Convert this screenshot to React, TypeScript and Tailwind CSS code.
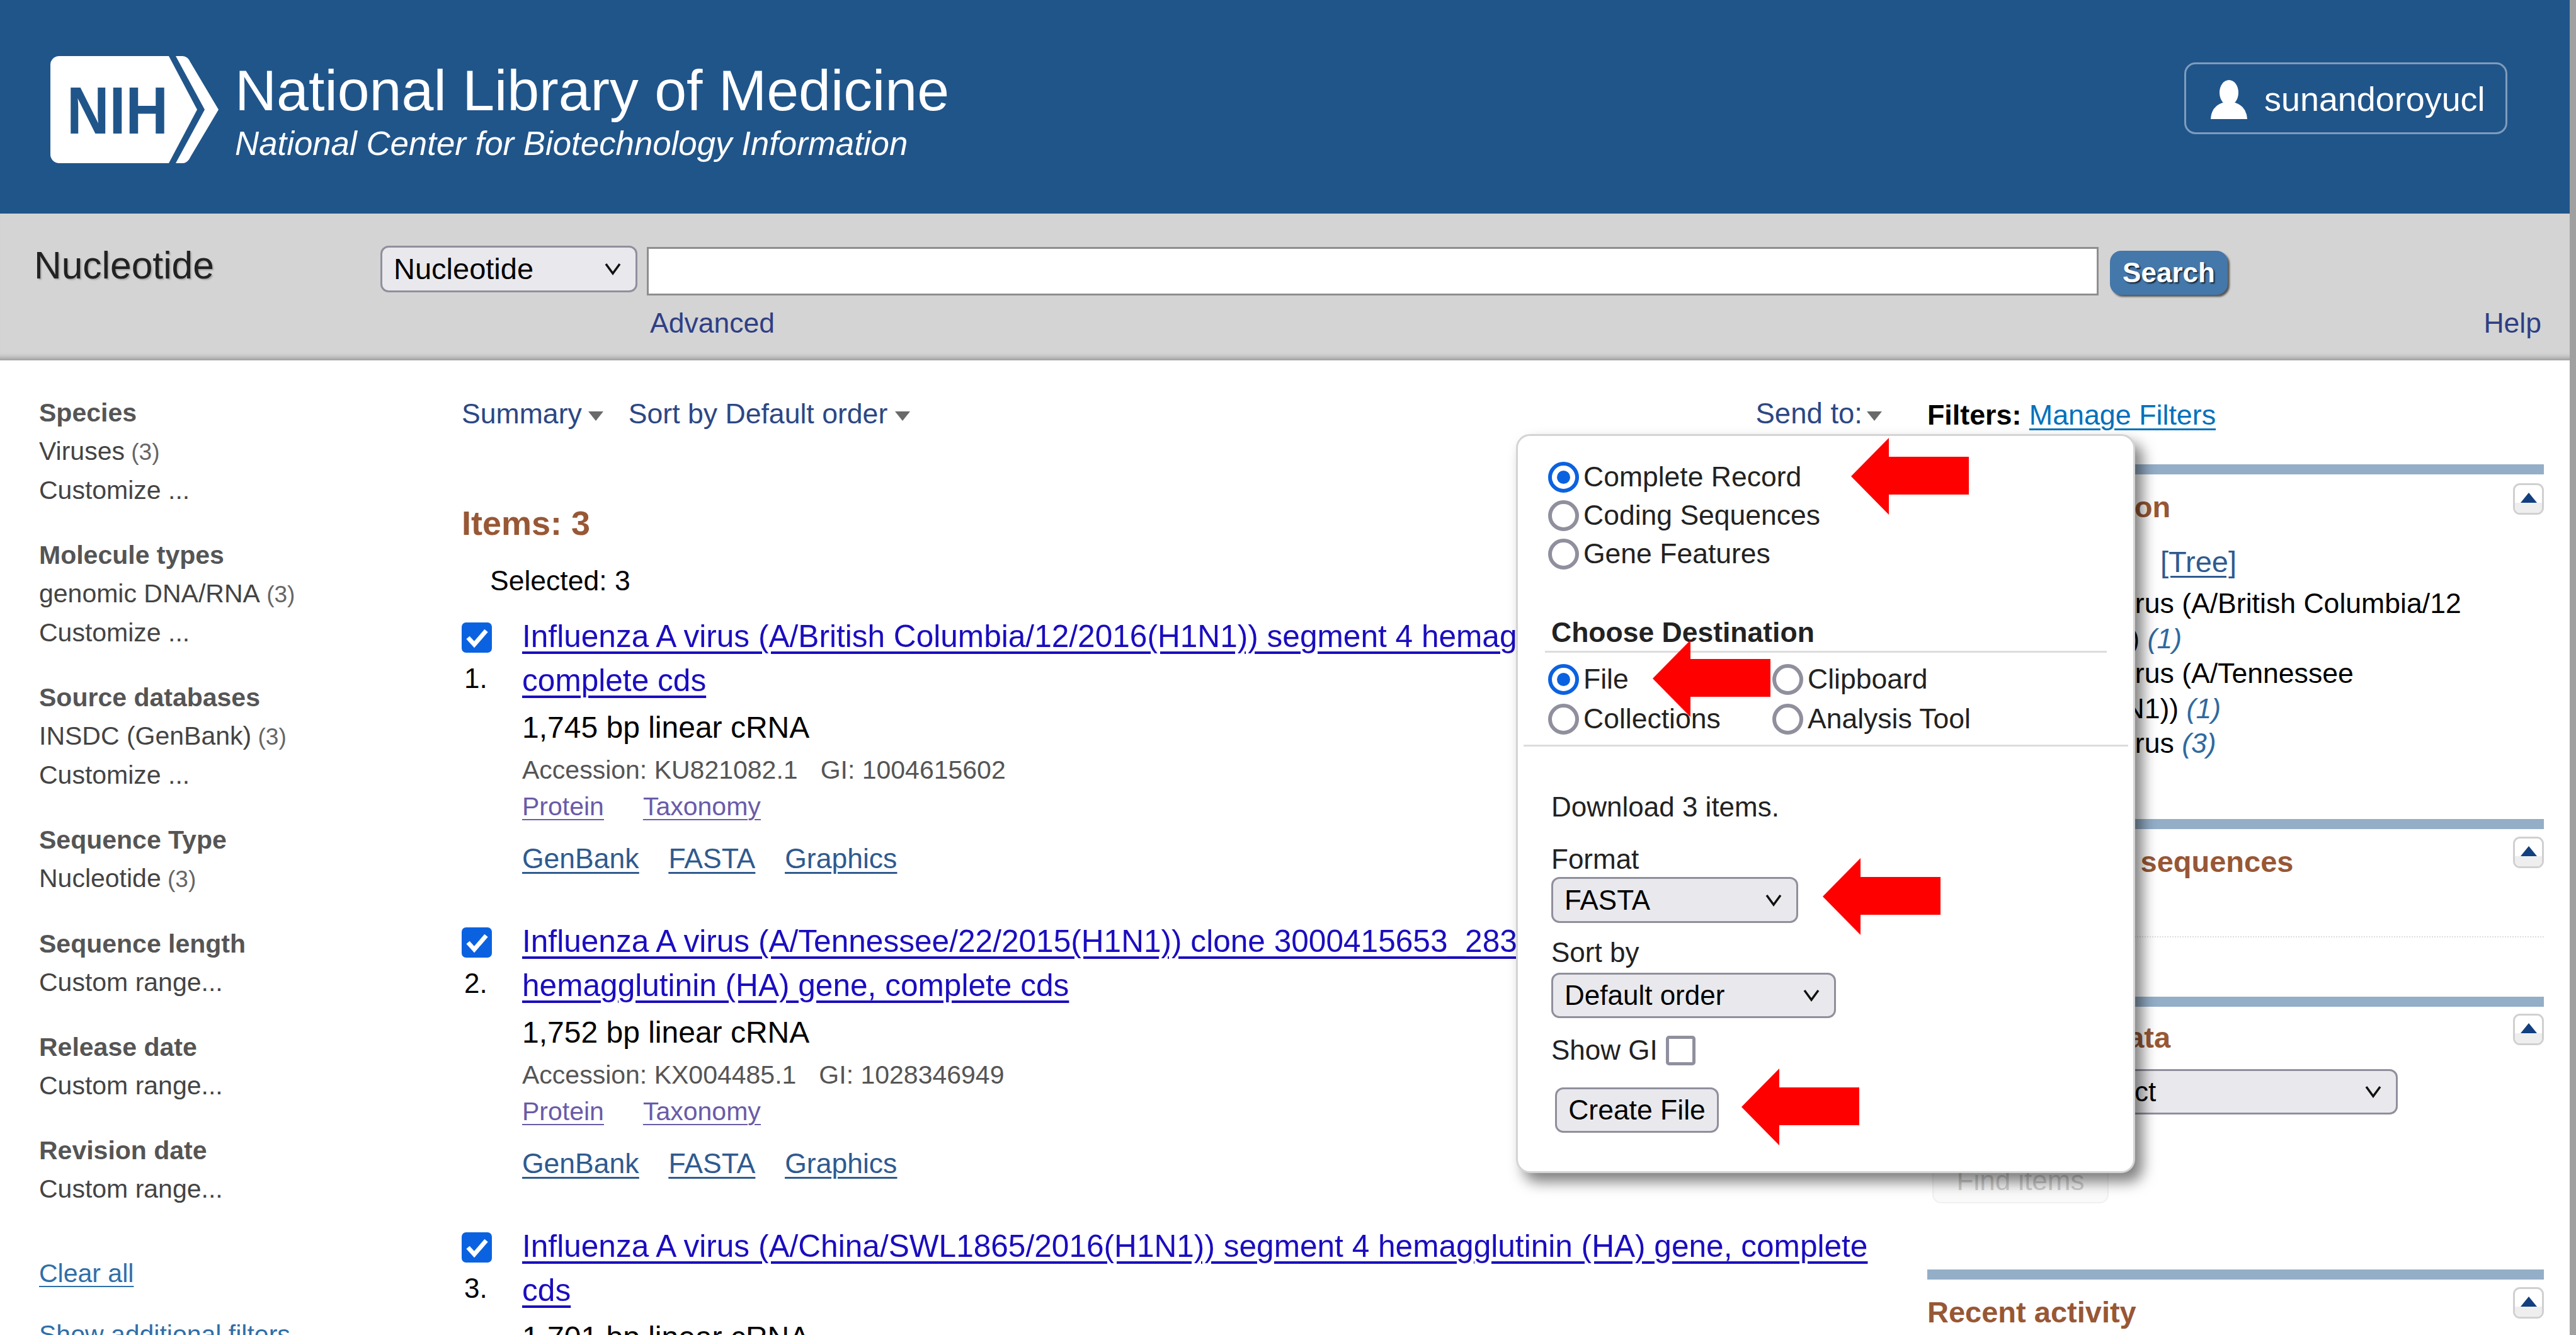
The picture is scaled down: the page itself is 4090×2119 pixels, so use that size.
import React from "react";

function Caret({ className = "" }: { className?: string }) {
  return (
    <svg width="24" height="20" viewBox="0 0 24 20" className={className}>
      <polygon points="0,3 24,3 12,18" fill="#6a6a6a" />
    </svg>
  );
}

function Chevron() {
  return (
    <svg width="28" height="20" viewBox="0 0 28 20" className="shrink-0">
      <path d="M3 2 L14 17 L25 2" fill="none" stroke="#111" strokeWidth="3.5" />
    </svg>
  );
}

function Dropdown({ label, className }: { label: string; className: string }) {
  return (
    <div
      className={`flex items-center justify-between rounded-[13px] border-[3px] border-[#8f8f9d] bg-[#e9e9ed] pl-[18px] pr-[22px] text-black ${className}`}
    >
      <span>{label}</span>
      <Chevron />
    </div>
  );
}

function Radio({ checked, label, className = "" }: { checked?: boolean; label: string; className?: string }) {
  return (
    <div className={`flex h-[61px] items-center text-[44.5px] text-[#222] ${className}`}>
      <span
        className={`mr-[7px] flex h-[49px] w-[49px] shrink-0 items-center justify-center rounded-full border-[6px] bg-white ${
          checked ? "border-[#0b62e0]" : "border-[#8f8f9d]"
        }`}
      >
        {checked && <span className="h-[21px] w-[21px] rounded-full bg-[#0b62e0]" />}
      </span>
      <span>{label}</span>
    </div>
  );
}

function Arrow({ className }: { className: string }) {
  return (
    <svg width="187" height="122" viewBox="0 0 187 122" className={`absolute ${className}`}>
      <polygon points="0,61 60,0 60,30 187,30 187,90 60,90 60,122" fill="#ff0000" />
    </svg>
  );
}

function Toggle() {
  return (
    <div className="flex h-[50px] w-[49px] shrink-0 flex-col items-center overflow-hidden rounded-[11px] border-[3px] border-[#d0d0d0] bg-white">
      <div className="flex h-[28px] w-full items-end justify-center">
        <svg width="26" height="16" viewBox="0 0 26 16">
          <polygon points="13,0 26,16 0,16" fill="#123f7f" />
        </svg>
      </div>
      <div className="w-full flex-1 bg-[#eeeeee]" />
    </div>
  );
}

function PanelHead({ title, offset }: { title: string; offset: string }) {
  return (
    <div className="flex items-start justify-between">
      <h3 className={`text-[47px] font-bold leading-[60px] text-[#985735] ${offset}`}>{title}</h3>
      <Toggle />
    </div>
  );
}

function SideGroup({ title, rows }: { title: string; rows: React.ReactNode[] }) {
  return (
    <div className="mb-[42px] text-[41px] leading-[61px] text-[#444]">
      <div className="font-bold text-[#555]">{title}</div>
      {rows.map((r, i) => (
        <div key={i}>{r}</div>
      ))}
    </div>
  );
}

const Count = ({ n }: { n: string }) => <span className="text-[37px] text-[#666]"> ({n})</span>;

function Item({
  n,
  l1,
  l2,
  size,
  acc,
  gi,
}: {
  n: string;
  l1: string;
  l2: string;
  size: string;
  acc?: string;
  gi?: string;
}) {
  return (
    <div className="mb-[66px] flex">
      <div className="w-[96px] shrink-0">
        <div className="mt-[13px] flex h-[48px] w-[48px] items-center justify-center rounded-[7px] bg-[#0b62e0]">
          <svg width="48" height="48" viewBox="0 0 48 48">
            <path d="M10 24 L20 35 L39 13" fill="none" stroke="#fff" strokeWidth="7" />
          </svg>
        </div>
        <div className="mt-[11px] pl-[4px] text-[44px] leading-[60px] text-black">{n}.</div>
      </div>
      <div className="min-w-0 flex-1">
        <a className="block whitespace-nowrap text-[49.6px] leading-[70px] text-[#1a0dc0] underline decoration-[4px] underline-offset-[7px]">
          {l1}
          <br />
          {l2}
        </a>
        <div className="mt-[10px] text-[48px] leading-[60px] text-black">{size}</div>
        {acc && (
          <>
            <div className="mt-[12px] flex gap-[36px] text-[41px] leading-[50px] text-[#555]">
              <span>Accession: {acc}</span>
              <span>GI: {gi}</span>
            </div>
            <div className="mt-[8px] flex gap-[62px] text-[41px] leading-[50px] text-[#6a5ba8] underline decoration-[2px] underline-offset-[6px]">
              <a>Protein</a>
              <a>Taxonomy</a>
            </div>
            <div className="mt-[28px] flex gap-[47px] text-[44.5px] leading-[60px] text-[#2f5a8f] underline decoration-[3px] underline-offset-[6px]">
              <a>GenBank</a>
              <a>FASTA</a>
              <a>Graphics</a>
            </div>
          </>
        )}
      </div>
    </div>
  );
}

export default function App() {
  return (
    <div className="relative flex h-[2119px] w-[4090px] overflow-hidden bg-white font-['Liberation_Sans',Arial,sans-serif]">
      <div className="flex w-[4080px] flex-col">
        {/* Masthead */}
        <header className="flex h-[339px] shrink-0 items-start justify-between bg-[#20558a] pl-[80px] pr-[99px]">
          <div className="mt-[89px] flex">
            <svg width="268" height="170" viewBox="0 0 268 170" className="shrink-0">
              <path
                d="M14 0 H188 L233 85 L188 170 H14 A14 14 0 0 1 0 156 V14 A14 14 0 0 1 14 0 Z"
                fill="#fff"
              />
              <path
                d="M199 0 H210 Q218 0 223 11 L267 85 L223 159 Q218 170 210 170 H199 L245 85 Z"
                fill="#fff"
              />
              <text
                x="26"
                y="123"
                fontSize="106"
                fontWeight="700"
                fill="#20558a"
                textLength="161"
                lengthAdjust="spacingAndGlyphs"
                fontFamily="'Liberation Sans', Arial, sans-serif"
              >
                NIH
              </text>
            </svg>
            <div className="ml-[25px] text-white">
              <div className="mt-[-1px] text-[91.5px] leading-[110px]">National Library of Medicine</div>
              <div className="mt-[-5px] text-[52.8px] italic leading-[70px]">
                National Center for Biotechnology Information
              </div>
            </div>
          </div>
          <button className="mt-[99px] flex h-[114px] w-[513px] items-center rounded-[18px] border-[3px] border-[#7f9cbc] pb-[0px] pl-[38px] pt-[3px] text-[53.9px] text-white">
            <svg width="60" height="62" viewBox="0 0 60 62" className="mr-[26px] shrink-0">
              <ellipse cx="30" cy="20" rx="15" ry="20" fill="#fff" />
              <path d="M20 36 L40 36 Q58 42 59 62 H1 Q2 42 20 36 Z" fill="#fff" />
            </svg>
            sunandoroyucl
          </button>
        </header>

        {/* Search bar */}
        <section className="h-[233px] shrink-0 bg-[#d4d4d4] shadow-[inset_0_-12px_10px_-9px_#8f8f8f]">
          <div className="flex items-start pt-[51px]">
            <h1 className="ml-[54px] mt-[2px] w-[550px] text-[60.5px] leading-[58px] text-[#222] [text-shadow:2px_2px_2px_#aaa]">
              Nucleotide
            </h1>
            <Dropdown label="Nucleotide" className="h-[74px] w-[408px] text-[47px]" />
            <div className="ml-[15px] mt-[2px] h-[77px] w-[2305px] border-[3px] border-[#8e8e8e] bg-white" />
            <button className="ml-[18px] mt-[8px] flex h-[70px] w-[187px] items-center justify-center rounded-[18px] bg-[#4477aa] text-[44px] font-bold text-white shadow-[3px_3px_3px_#555] [text-shadow:2px_2px_2px_#123]">
              Search
            </button>
          </div>
          <div className="flex justify-between pl-[1032px] pr-[45px] pt-[16px] text-[44.5px] leading-[56px] text-[#2f3f85]">
            <a>Advanced</a>
            <a>Help</a>
          </div>
        </section>

        {/* Body */}
        <div className="flex flex-1 pt-[53px]">
          <aside className="w-[733px] shrink-0 pl-[62px]">
            <SideGroup title="Species" rows={[<>Viruses<Count n="3" /></>, "Customize ..."]} />
            <SideGroup title="Molecule types" rows={[<>genomic DNA/RNA<Count n="3" /></>, "Customize ..."]} />
            <SideGroup title="Source databases" rows={[<>INSDC (GenBank)<Count n="3" /></>, "Customize ..."]} />
            <SideGroup title="Sequence Type" rows={[<>Nucleotide<Count n="3" /></>]} />
            <SideGroup title="Sequence length" rows={["Custom range..."]} />
            <SideGroup title="Release date" rows={["Custom range..."]} />
            <SideGroup title="Revision date" rows={["Custom range..."]} />
            <a className="mt-[73px] block text-[41px] leading-[61px] text-[#2f6fa8] underline decoration-[2px] underline-offset-[6px]">
              Clear all
            </a>
            <a className="mt-[36px] block text-[41px] leading-[61px] text-[#2f6fa8] underline decoration-[2px] underline-offset-[6px]">
              Show additional filters
            </a>
          </aside>

          <main className="w-[2327px] shrink-0 pr-[72px]">
            <div className="flex h-[61px] items-center justify-between pt-[3px] text-[44.6px] text-[#2c4785]">
              <div className="flex items-center">
                <span>Summary</span>
                <Caret className="ml-[10px] mt-[6px]" />
                <span className="ml-[40px]">Sort by Default order</span>
                <Caret className="ml-[12px] mt-[6px]" />
              </div>
              <div className="flex items-center text-[45.5px]">
                <span>Send to:</span>
                <Caret className="ml-[7px] mt-[6px]" />
              </div>
            </div>
            <h2 className="mt-[109px] text-[54px] font-bold leading-[70px] text-[#985735]">Items: 3</h2>
            <div className="mt-[27px] pl-[45px] text-[44.5px] leading-[60px] text-black">Selected: 3</div>
            <div className="mt-[23px]">
              <Item
                n="1"
                l1="Influenza A virus (A/British Columbia/12/2016(H1N1)) segment 4 hemagglutinin (HA) gene,"
                l2="complete cds"
                size="1,745 bp linear cRNA"
                acc="KU821082.1"
                gi="1004615602"
              />
              <Item
                n="2"
                l1="Influenza A virus (A/Tennessee/22/2015(H1N1)) clone 3000415653_2830 segment 4"
                l2="hemagglutinin (HA) gene, complete cds"
                size="1,752 bp linear cRNA"
                acc="KX004485.1"
                gi="1028346949"
              />
              <Item
                n="3"
                l1="Influenza A virus (A/China/SWL1865/2016(H1N1)) segment 4 hemagglutinin (HA) gene, complete"
                l2="cds"
                size="1,701 bp linear cRNA"
              />
            </div>
          </main>

          <aside className="w-[979px] shrink-0">
            <div className="h-[61px] text-[44.8px] leading-[66px] text-black">
              <b>Filters:</b>{" "}
              <a className="text-[#0071bc] underline decoration-[3px] underline-offset-[6px]">Manage Filters</a>
            </div>

            <div className="mt-[51px] h-[16px] bg-[#94aec8]" />
            <div className="mt-[14px]">
              <PanelHead title="Results by taxon" offset="pl-[10px] pt-[8px]" />
            </div>
            <div className="mt-[27px] text-[47px] leading-[60px] text-[#2f5a8f]">
              <span className="inline-block w-[370px] text-[44px] text-[#444]">Top Organisms</span>
              <a className="underline decoration-[3px] underline-offset-[6px]">[Tree]</a>
            </div>
            <div className="mt-[7px] pl-[67px] text-[44.6px] leading-[55.5px] text-black">
              Influenza A virus (A/British Columbia/12
              <br />
              /2016(H1N1)) <i className="text-[#2f6a9f]">(1)</i>
              <br />
              Influenza A virus (A/Tennessee
              <br />
              /22/2015(H1N1)) <i className="text-[#2f6a9f]">(1)</i>
              <br />
              Influenza A virus <i className="text-[#2f6a9f]">(3)</i>
            </div>

            <div className="mt-[92px] h-[16px] bg-[#94aec8]" />
            <div className="mt-[12px]">
              <PanelHead title="Analyze these sequences" offset="pl-[12px] pt-[10px]" />
            </div>
            <div className="mt-[10px] h-[80px] border-b-[2px] border-dotted border-[#ddd] text-[44px] leading-[60px] text-[#2f5a8f]">
              Run BLAST
            </div>

            <div className="mt-[94px] h-[16px] bg-[#94aec8]" />
            <div className="mt-[11px]">
              <PanelHead title="Find related data" offset="pl-[10px] pt-[8px]" />
            </div>
            <div className="mt-[20px] flex items-center text-[44px] text-black">
              <span className="w-[220px]">Database:</span>
              <Dropdown label="Select" className="h-[72px] w-[527px] text-[44px]" />
            </div>
            <button className="ml-[8px] mt-[70px] flex h-[71px] w-[280px] items-center justify-center rounded-[14px] border-[2px] border-[#f0f0f0] bg-[#fafafa] text-[44px] text-[#cfcfcf]">
              Find items
            </button>

            <div className="mt-[105px] h-[16px] bg-[#94aec8]" />
            <div className="mt-[12px]">
              <PanelHead title="Recent activity" offset="pt-[10px]" />
            </div>
          </aside>
        </div>
      </div>

      <div className="w-[10px] shrink-0 bg-[#a0a0a0]" />

      {/* Send to popup */}
      <div className="absolute left-[2407px] top-[689px] h-[1173px] w-[983px] rounded-[22px] border-[3px] border-[#d4d4d4] bg-white pl-[48px] pt-[35px] shadow-[12px_14px_22px_rgba(0,0,0,0.5)]">
        <Radio checked label="Complete Record" />
        <Radio label="Coding Sequences" />
        <Radio label="Gene Features" />
        <div className="ml-[-5px] mr-[42px] mt-[66px] h-[60px] border-b-[3px] border-[#dcdcdc] pl-[10px] text-[44.5px] font-bold leading-[56px] text-[#222]">
          Choose Destination
        </div>
        <div className="mt-[12px] grid grid-cols-[356px_1fr] gap-y-[2px]">
          <Radio checked label="File" />
          <Radio label="Clipboard" />
          <Radio label="Collections" />
          <Radio label="Analysis Tool" />
        </div>
        <div className="ml-[-39px] mr-[8px] mt-[10px] border-b-[3px] border-[#dcdcdc]" />
        <div className="pl-[5px]">
          <div className="mt-[68px] text-[44px] leading-[56px] text-[#222]">Download 3 items.</div>
          <div className="mt-[27px] text-[44px] leading-[56px] text-[#222]">Format</div>
          <Dropdown label="FASTA" className="h-[73px] w-[392px] text-[44px]" />
          <div className="mt-[19px] text-[44px] leading-[56px] text-[#222]">Sort by</div>
          <Dropdown label="Default order" className="mt-[4px] h-[72px] w-[452px] text-[44px]" />
          <div className="mt-[24px] flex h-[54px] items-center text-[44px] text-[#222]">
            <span>Show GI</span>
            <span className="ml-[13px] h-[47px] w-[47px] rounded-[5px] border-[5px] border-[#8f8f9d] bg-white" />
          </div>
          <button className="ml-[6px] mt-[32px] flex h-[72px] w-[260px] items-center justify-center rounded-[13px] border-[3px] border-[#8f8f9d] bg-[#e9e9ed] text-[44.5px] text-black">
            Create File
          </button>
        </div>
      </div>

      <Arrow className="left-[2939px] top-[695px]" />
      <Arrow className="left-[2624px] top-[1016px]" />
      <Arrow className="left-[2894px] top-[1362px]" />
      <Arrow className="left-[2765px] top-[1696px]" />
    </div>
  );
}
